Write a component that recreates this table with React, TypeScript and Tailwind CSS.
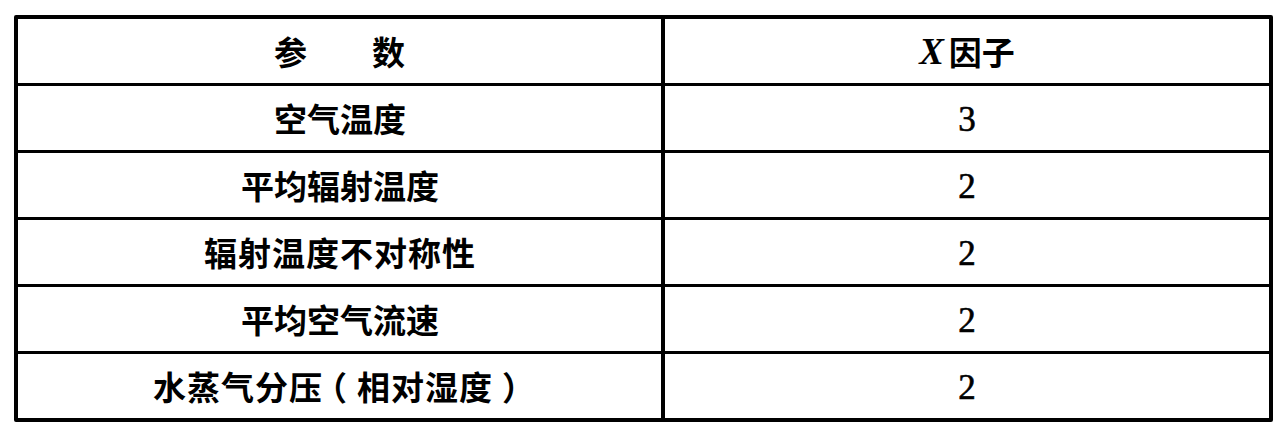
import React from "react";

const rows: [React.ReactNode, string, string][] = [
  ["空气温度", "3", ""],
  ["平均辐射温度", "2", ""],
  ["辐射温度不对称性", "2", "tracking-[1px]"],
  ["平均空气流速", "2", ""],
  [
    <>
      水蒸气分压
      <span className="inline-block w-[34px] text-left indent-[-9px] whitespace-nowrap">（</span>
      相对湿度
      <span className="inline-block w-[34px] text-left indent-[9px] whitespace-nowrap">）</span>
    </>,
    "2",
    "tracking-[1px]",
  ],
];

export default function App() {
  return (
    <div className="w-[1287px] h-[443px] bg-white pt-[15px] pl-[14px]">
      <div className="w-[1259px] grid grid-cols-[643px_604px] gap-x-[4px] gap-y-[3px] bg-black border-4 border-black rounded-[2px]">
        <div className="bg-white h-[64px] flex items-center justify-center text-[33px] font-bold text-black leading-none font-['Noto_Sans_CJK_SC',sans-serif]">
          <span>参</span>
          <span className="ml-[65px]">数</span>
        </div>
        <div className="bg-white h-[64px] flex items-center justify-center text-black leading-none">
          <span className="font-['Liberation_Serif',serif] italic font-bold text-[37px] mr-[5px]">X</span>
          <span className="font-['Noto_Sans_CJK_SC',sans-serif] font-bold text-[33px]">因子</span>
        </div>
        {rows.map(([a, b, t], i) => (
          <React.Fragment key={i}>
            <div className="bg-white h-[64px] flex items-center justify-center text-[33px] font-bold text-black leading-none font-['Noto_Sans_CJK_SC',sans-serif]">
              <span className={`whitespace-nowrap ${t} mr-[-1px]`}>{a}</span>
            </div>
            <div className="bg-white h-[64px] flex items-center justify-center text-[35px] text-black leading-none font-['Liberation_Serif',serif] pt-[2px] [-webkit-text-stroke:0.6px_black]">
              {b}
            </div>
          </React.Fragment>
        ))}
      </div>
    </div>
  );
}
